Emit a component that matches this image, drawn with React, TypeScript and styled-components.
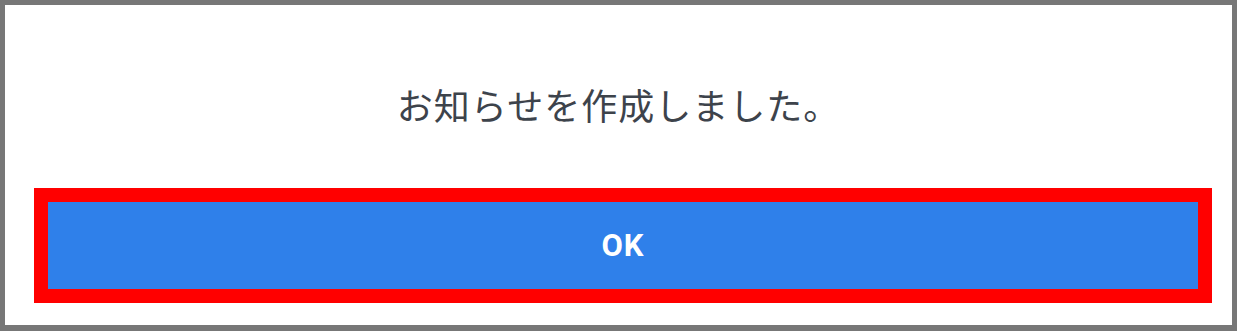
import React from 'react'
import styled, { createGlobalStyle } from 'styled-components'

const GlobalStyle = createGlobalStyle`
    html, body {
        margin: 0;
        padding: 0;
        background: #ffffff;
    }
`

const Dialog = styled.div`
    box-sizing: border-box;
    width: 1237px;
    height: 331px;
    border: 5px solid #777777;
    border-bottom-width: 6px;
    background: #ffffff;
    display: flex;
    flex-direction: column;
`

const Message = styled.p`
    margin: 0;
    height: 183px;
    box-sizing: border-box;
    padding-top: 14px;
    display: flex;
    align-items: center;
    justify-content: center;
    font-family: "Noto Sans CJK JP", "Noto Sans", sans-serif;
    font-size: 36px;
    font-weight: 400;
    letter-spacing: 1px;
    color: #3d434b;
`

const Highlight = styled.div`
    margin: 0 20px 0 29px;
    border: 14px solid #ff0000;
`

const OkButton = styled.button`
    display: block;
    width: 100%;
    height: 87px;
    border: none;
    border-radius: 0;
    background: #2f80ea;
    color: #ffffff;
    font-family: Roboto, "Liberation Sans", sans-serif;
    font-weight: 700;
    font-size: 31px;
    letter-spacing: 1px;
    cursor: pointer;
`

export default function App() {
    return <>
        <GlobalStyle />
        <Dialog>
            <Message>お知らせを作成しました。</Message>
            <Highlight>
                <OkButton type='button'>OK</OkButton>
            </Highlight>
        </Dialog>
    </>
}
